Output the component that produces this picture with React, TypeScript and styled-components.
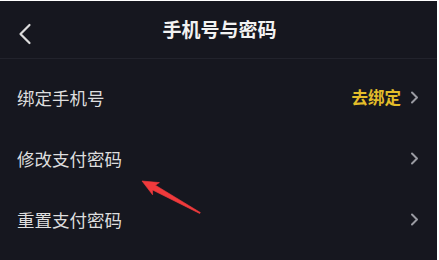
import styled, { createGlobalStyle } from "styled-components";

const GlobalStyle = createGlobalStyle`
  html, body {
    margin: 0;
    padding: 0;
    background: #fff;
  }
  body {
    font-family: "Noto Sans CJK SC", "Noto Sans", sans-serif;
  }
`;

const Screen = styled.div`
  position: relative;
  width: 437px;
  height: 259px;
  margin-top: 1px;
  background: #16171f;
  overflow: hidden;
  display: flex;
  flex-direction: column;
`;

const NavBar = styled.div`
  height: 57px;
  border-bottom: 1px solid #22232c;
  display: flex;
  align-items: center;
  justify-content: center;
  position: relative;
`;

const BackButton = styled.div`
  position: absolute;
  left: 17px;
  top: 21px;
  width: 16px;
  height: 24px;
  display: flex;
`;

const Title = styled.div`
  color: #f2f2f2;
  font-size: 19px;
  font-weight: 700;
  line-height: 1;
  margin-top: -2px;
  margin-left: 2px;
`;

const List = styled.div`
  display: flex;
  flex-direction: column;
  padding-top: 8px;
`;

const Row = styled.div`
  height: 61px;
  display: flex;
  align-items: center;
  padding: 0 18px 0 17px;
`;

const Label = styled.div`
  flex: 1;
  color: #dedede;
  font-size: 17.5px;
  line-height: 1;
`;

const Value = styled.span`
  color: #e3bd2a;
  font-size: 16.5px;
  font-weight: 700;
  line-height: 1;
  margin-right: 9px;
`;

const Chevron = styled.svg`
  width: 9px;
  height: 13px;
  display: block;
`;

const Pointer = styled.svg`
  position: absolute;
  left: 138px;
  top: 175px;
  width: 68px;
  height: 42px;
`;

const Arrow = () => (
  <Chevron viewBox="0 0 9 13">
    <path d="M2 1.5 L7 6.5 L2 11.5" fill="none" stroke="#9a9ba2" strokeWidth="2" strokeLinecap="round" strokeLinejoin="round" />
  </Chevron>
);

const rows = [
  { label: "绑定手机号", value: "去绑定" },
  { label: "修改支付密码" },
  { label: "重置支付密码" },
];

export default function App() {
  return (
    <>
      <GlobalStyle />
      <Screen>
        <NavBar>
          <BackButton>
            <svg viewBox="0 0 16 24" width="16" height="24">
              <path d="M12.5 3 L3.5 12 L12.5 21" fill="none" stroke="#dcdcdc" strokeWidth="2.2" strokeLinecap="round" strokeLinejoin="round" />
            </svg>
          </BackButton>
          <Title>手机号与密码</Title>
        </NavBar>
        <List>
          {rows.map((r) => (
            <Row key={r.label}>
              <Label>{r.label}</Label>
              {r.value && <Value>{r.value}</Value>}
              <Arrow />
            </Row>
          ))}
        </List>
        <Pointer viewBox="0 0 68 42">
          <path d="M4 5 L21.4 6.6 L17.4 9.2 L62.3 36.5 L61.7 37.5 L14.6 14 L14.6 18.8 Z" fill="#f03a3c" stroke="#f03a3c" strokeWidth="0.6" strokeLinejoin="round" />
        </Pointer>
      </Screen>
    </>
  );
}
